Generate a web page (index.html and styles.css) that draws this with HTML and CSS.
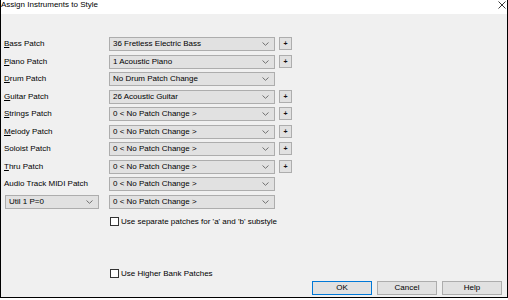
FILE: index.html
```html
<!DOCTYPE html>
<html>
<head>
<meta charset="utf-8">
<link rel="stylesheet" href="styles.css">
</head>
<body>
<div class="window">
  <div class="titlebar">
    <span class="title">Assign Instruments to Style</span>
    <svg class="close" width="8" height="8" viewBox="0 0 8 8"><path d="M0.5 0.5 L7.5 7.5 M7.5 0.5 L0.5 7.5" stroke="#222" stroke-width="0.9" fill="none"/></svg>
  </div>
  <div class="content">
    <div class="grid">
      <div class="label"><u>B</u>ass Patch</div>
      <div class="combo"><span>36 Fretless Electric Bass</span><svg class="chev" width="7" height="4" viewBox="0 0 7 4"><polyline points="0.5,0.5 3.5,3.3 6.5,0.5" stroke="#707070" stroke-width="1" fill="none"/></svg></div>
      <div class="plus">+</div>

      <div class="label"><u>P</u>iano Patch</div>
      <div class="combo"><span>1 Acoustic Piano</span><svg class="chev" width="7" height="4" viewBox="0 0 7 4"><polyline points="0.5,0.5 3.5,3.3 6.5,0.5" stroke="#707070" stroke-width="1" fill="none"/></svg></div>
      <div class="plus">+</div>

      <div class="label"><u>D</u>rum Patch</div>
      <div class="combo"><span>No Drum Patch Change</span><svg class="chev" width="7" height="4" viewBox="0 0 7 4"><polyline points="0.5,0.5 3.5,3.3 6.5,0.5" stroke="#707070" stroke-width="1" fill="none"/></svg></div>
      <div></div>

      <div class="label"><u>G</u>uitar Patch</div>
      <div class="combo"><span>26 Acoustic Guitar</span><svg class="chev" width="7" height="4" viewBox="0 0 7 4"><polyline points="0.5,0.5 3.5,3.3 6.5,0.5" stroke="#707070" stroke-width="1" fill="none"/></svg></div>
      <div class="plus">+</div>

      <div class="label"><u>S</u>trings Patch</div>
      <div class="combo"><span>0 &lt; No Patch Change &gt;</span><svg class="chev" width="7" height="4" viewBox="0 0 7 4"><polyline points="0.5,0.5 3.5,3.3 6.5,0.5" stroke="#707070" stroke-width="1" fill="none"/></svg></div>
      <div class="plus">+</div>

      <div class="label"><u>M</u>elody Patch</div>
      <div class="combo"><span>0 &lt; No Patch Change &gt;</span><svg class="chev" width="7" height="4" viewBox="0 0 7 4"><polyline points="0.5,0.5 3.5,3.3 6.5,0.5" stroke="#707070" stroke-width="1" fill="none"/></svg></div>
      <div class="plus">+</div>

      <div class="label">Soloist Patch</div>
      <div class="combo"><span>0 &lt; No Patch Change &gt;</span><svg class="chev" width="7" height="4" viewBox="0 0 7 4"><polyline points="0.5,0.5 3.5,3.3 6.5,0.5" stroke="#707070" stroke-width="1" fill="none"/></svg></div>
      <div class="plus">+</div>

      <div class="label"><u>T</u>hru Patch</div>
      <div class="combo"><span>0 &lt; No Patch Change &gt;</span><svg class="chev" width="7" height="4" viewBox="0 0 7 4"><polyline points="0.5,0.5 3.5,3.3 6.5,0.5" stroke="#707070" stroke-width="1" fill="none"/></svg></div>
      <div class="plus">+</div>

      <div class="label">Audio Track MIDI Patch</div>
      <div class="combo"><span>0 &lt; No Patch Change &gt;</span><svg class="chev" width="7" height="4" viewBox="0 0 7 4"><polyline points="0.5,0.5 3.5,3.3 6.5,0.5" stroke="#707070" stroke-width="1" fill="none"/></svg></div>
      <div></div>

      <div class="combo util"><span>Util 1 P=0</span><svg class="chev" width="7" height="4" viewBox="0 0 7 4"><polyline points="0.5,0.5 3.5,3.3 6.5,0.5" stroke="#707070" stroke-width="1" fill="none"/></svg></div>
      <div class="combo"><span>0 &lt; No Patch Change &gt;</span><svg class="chev" width="7" height="4" viewBox="0 0 7 4"><polyline points="0.5,0.5 3.5,3.3 6.5,0.5" stroke="#707070" stroke-width="1" fill="none"/></svg></div>
      <div></div>
    </div>
    <div class="check first"><span class="box"></span><span>Use separate patches for 'a' and 'b' substyle</span></div>
    <div class="check second"><span class="box"></span><span>Use Higher Bank Patches</span></div>
    <div class="buttons">
      <div class="btn default">OK</div>
      <div class="btn">Cancel</div>
      <div class="btn">Help</div>
    </div>
  </div>
</div>
</body>
</html>
```
FILE: styles.css
```css
html, body {
  margin: 0;
  padding: 0;
  background: #ffffff;
}
body {
  font-family: "Liberation Sans", Arial, sans-serif;
  font-size: 8px;
  color: #000;
}
.window {
  width: 508px;
  height: 298px;
  box-sizing: border-box;
  border-left: 1px solid #000;
  border-right: 1px solid #000;
  border-bottom: 1px solid #000;
  background: #f0f0f0;
  display: flex;
  flex-direction: column;
}
.titlebar {
  height: 14px;
  background: #ffffff;
  display: flex;
  align-items: flex-start;
  justify-content: space-between;
  line-height: 10px;
}
.close {
  margin-top: 1px;
  margin-right: 1px;
}
.content {
  flex: 1;
  padding: 23px 0 0 3px;
  display: flex;
  flex-direction: column;
}
.grid {
  display: grid;
  grid-template-columns: 101px 166px 13px;
  grid-auto-rows: 14px;
  column-gap: 4px;
  row-gap: 3.5px;
}
.label {
  line-height: 14px;
  white-space: nowrap;
}
.combo {
  box-sizing: border-box;
  border: 1px solid #adadad;
  background: #e1e1e1;
  display: flex;
  align-items: center;
  justify-content: space-between;
  padding: 0 5px 0 3px;
  line-height: 12px;
  white-space: nowrap;
}
.combo.util {
  width: 94px;
  margin-left: 1px;
}
.chev {
  display: block;
}
.plus {
  box-sizing: border-box;
  height: 13px;
  border: 1px solid #adadad;
  background: #e1e1e1;
  display: flex;
  align-items: center;
  justify-content: center;
  font-size: 7px;
  font-weight: bold;
  line-height: 1;
  color: #111;
}
.check {
  display: flex;
  align-items: center;
  gap: 2px;
  padding-left: 106px;
  height: 10px;
  line-height: 10px;
}
.check.first {
  margin-top: 8px;
}
.check.second {
  margin-top: 42px;
}
.box {
  box-sizing: border-box;
  width: 9px;
  height: 9px;
  border: 1px solid #333;
  background: #fff;
}
.buttons {
  display: flex;
  justify-content: flex-end;
  gap: 5px;
  padding-right: 5px;
  margin-top: 2px;
}
.btn {
  box-sizing: border-box;
  width: 60px;
  height: 14px;
  border: 1px solid #adadad;
  background: #e1e1e1;
  text-align: center;
  line-height: 12px;
}
.btn.default {
  border-color: #0078d7;
}
```
